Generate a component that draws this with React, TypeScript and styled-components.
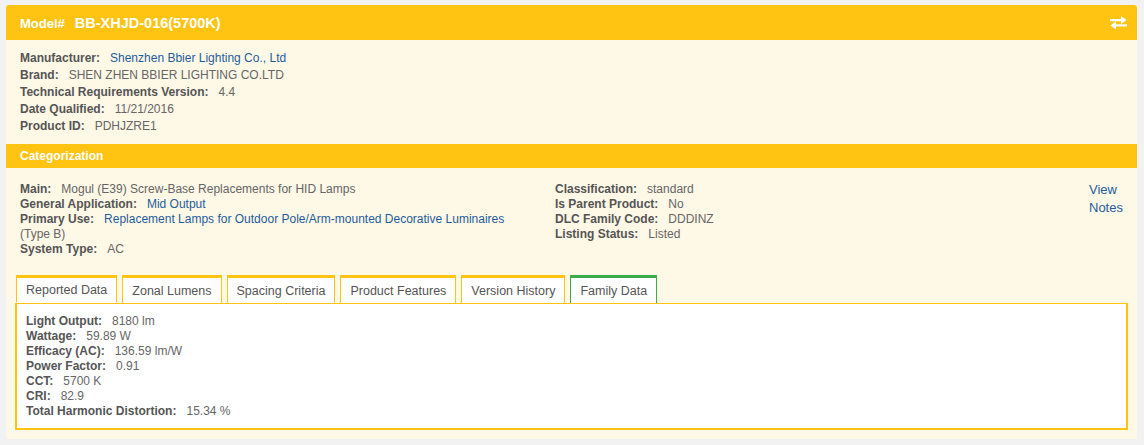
import React from 'react'
import styled, { createGlobalStyle } from 'styled-components'

// ── Data ──────────────────────────────────────────────────────────────────────

type Field = { label: string; value: string; link?: boolean; suffix?: string }

const PRODUCT: Field[] = [
  { label: 'Manufacturer:', value: 'Shenzhen Bbier Lighting Co., Ltd', link: true },
  { label: 'Brand:', value: 'SHEN ZHEN BBIER LIGHTING CO.LTD' },
  { label: 'Technical Requirements Version:', value: '4.4' },
  { label: 'Date Qualified:', value: '11/21/2016' },
  { label: 'Product ID:', value: 'PDHJZRE1' },
]

const CATEGORY_LEFT: Field[] = [
  { label: 'Main:', value: 'Mogul (E39) Screw-Base Replacements for HID Lamps' },
  { label: 'General Application:', value: 'Mid Output', link: true },
  { label: 'Primary Use:', value: 'Replacement Lamps for Outdoor Pole/Arm-mounted Decorative Luminaires', link: true, suffix: '(Type B)' },
  { label: 'System Type:', value: 'AC' },
]

const CATEGORY_RIGHT: Field[] = [
  { label: 'Classification:', value: 'standard' },
  { label: 'Is Parent Product:', value: 'No' },
  { label: 'DLC Family Code:', value: 'DDDINZ' },
  { label: 'Listing Status:', value: 'Listed' },
]

const REPORTED: Field[] = [
  { label: 'Light Output:', value: '8180 lm' },
  { label: 'Wattage:', value: '59.89 W' },
  { label: 'Efficacy (AC):', value: '136.59 lm/W' },
  { label: 'Power Factor:', value: '0.91' },
  { label: 'CCT:', value: '5700 K' },
  { label: 'CRI:', value: '82.9' },
  { label: 'Total Harmonic Distortion:', value: '15.34 %' },
]

const TABS = ['Reported Data', 'Zonal Lumens', 'Spacing Criteria', 'Product Features', 'Version History', 'Family Data']

// ── Styled ────────────────────────────────────────────────────────────────────

const YELLOW = '#ffc312'
const CREAM = '#fef8e6'
const TEXT = '#555'
const LINK = '#1f5d9c'

const Global = createGlobalStyle`
  html, body { margin: 0; padding: 0; background: #f2f2f2; }
  body { font-family: "Liberation Sans", Arial, sans-serif; font-size: 12px; color: ${TEXT}; }
`

const Page = styled.div`
  padding: 5px 7px 8px 6px;
`

const Panel = styled.div`
  background: ${CREAM};
  border-radius: 3px 3px 0 0;
  padding-bottom: 9px;
`

const Header = styled.div`
  height: 35px;
  background: ${YELLOW};
  border-radius: 3px 3px 0 0;
  display: flex;
  align-items: center;
  justify-content: space-between;
  padding: 0 10px 0 14px;
  color: #fff;
  font-weight: bold;
`

const ModelTag = styled.span`
  font-size: 13px;
  margin-right: 10px;
`

const ModelName = styled.span`
  font-size: 14.5px;
`

const SwapButton = styled.span`
  display: flex;
  align-items: center;
  line-height: 0;
`

const InfoBlock = styled.div`
  padding: 10px 14px 9px;
`

const Row = styled.div<{ $lh: number }>`
  line-height: ${(p) => p.$lh}px;
`

const Label = styled.span`
  font-weight: bold;
  color: ${TEXT};
  margin-right: 10px;
`

const Value = styled.span<{ $link?: boolean }>`
  color: ${(p) => (p.$link ? LINK : '#666')};
`

const SectionBar = styled.div`
  height: 24px;
  background: ${YELLOW};
  color: #fff;
  font-weight: bold;
  display: flex;
  align-items: center;
  padding-left: 14px;
`

const CategoryGrid = styled.div`
  display: grid;
  grid-template-columns: 500px 1fr auto;
  column-gap: 35px;
  padding: 14px 14px 18px 14px;
`

const NotesLink = styled.a`
  color: ${LINK};
  font-size: 13px;
  line-height: 18px;
  width: 34px;
  margin-top: -1px;
  text-decoration: none;
`

const TabsArea = styled.div`
  padding: 0 9px 0 9px;
`

const TabStrip = styled.div`
  display: flex;
  gap: 5px;
  padding-left: 1px;
  position: relative;
  z-index: 1;
`

const Tab = styled.div<{ $active?: boolean; $green?: boolean }>`
  height: 28px;
  box-sizing: border-box;
  padding: 0 9px;
  display: flex;
  align-items: center;
  font-size: 12.5px;
  color: ${TEXT};
  background: #fff;
  border: 1px solid ${(p) => (p.$green ? '#3cab4a' : YELLOW)};
  border-top-width: 3px;
  border-bottom: ${(p) => (p.$active ? '1px solid #fff' : 'none')};
  margin-bottom: ${(p) => (p.$active ? '-1px' : '0')};
`

const TabBody = styled.div`
  background: #fff;
  border: 1px solid ${YELLOW};
  border-width: 1px 2px 2px 2px;
  padding: 10px 9px 9px 9px;
`

// ── Parts ─────────────────────────────────────────────────────────────────────

function SwapIcon() {
  return (
    <svg width="17" height="13" viewBox="0 0 17 13" fill="#fff">
      <rect x="0" y="3" width="13" height="2.2" />
      <path d="M11 0 L16.5 4.1 L11 8.2 Z" />
      <rect x="4" y="8.3" width="13" height="2.2" />
      <path d="M6 5.3 L0.5 9.4 L6 13.5 Z" />
    </svg>
  )
}

function FieldList({ items, lh }: { items: Field[]; lh: number }) {
  return (
    <div>
      {items.map((f) => (
        <Row key={f.label} $lh={lh}>
          <Label>{f.label}</Label>
          <Value $link={f.link}>{f.value}</Value>
          {f.suffix && <Value> {f.suffix}</Value>}
        </Row>
      ))}
    </div>
  )
}

// ── App ───────────────────────────────────────────────────────────────────────

export default function App() {
  return (
    <Page>
      <Global />
      <Panel>
        <Header>
          <div>
            <ModelTag>Model#</ModelTag>
            <ModelName>BB-XHJD-016(5700K)</ModelName>
          </div>
          <SwapButton><SwapIcon /></SwapButton>
        </Header>

        <InfoBlock>
          <FieldList items={PRODUCT} lh={17} />
        </InfoBlock>

        <SectionBar>Categorization</SectionBar>

        <CategoryGrid>
          <FieldList items={CATEGORY_LEFT} lh={15} />
          <FieldList items={CATEGORY_RIGHT} lh={15} />
          <NotesLink href="#">View Notes</NotesLink>
        </CategoryGrid>

        <TabsArea>
          <TabStrip>
            {TABS.map((t, i) => (
              <Tab key={t} $active={i === 0} $green={t === 'Family Data'}>{t}</Tab>
            ))}
          </TabStrip>
          <TabBody>
            <FieldList items={REPORTED} lh={15} />
          </TabBody>
        </TabsArea>
      </Panel>
    </Page>
  )
}
